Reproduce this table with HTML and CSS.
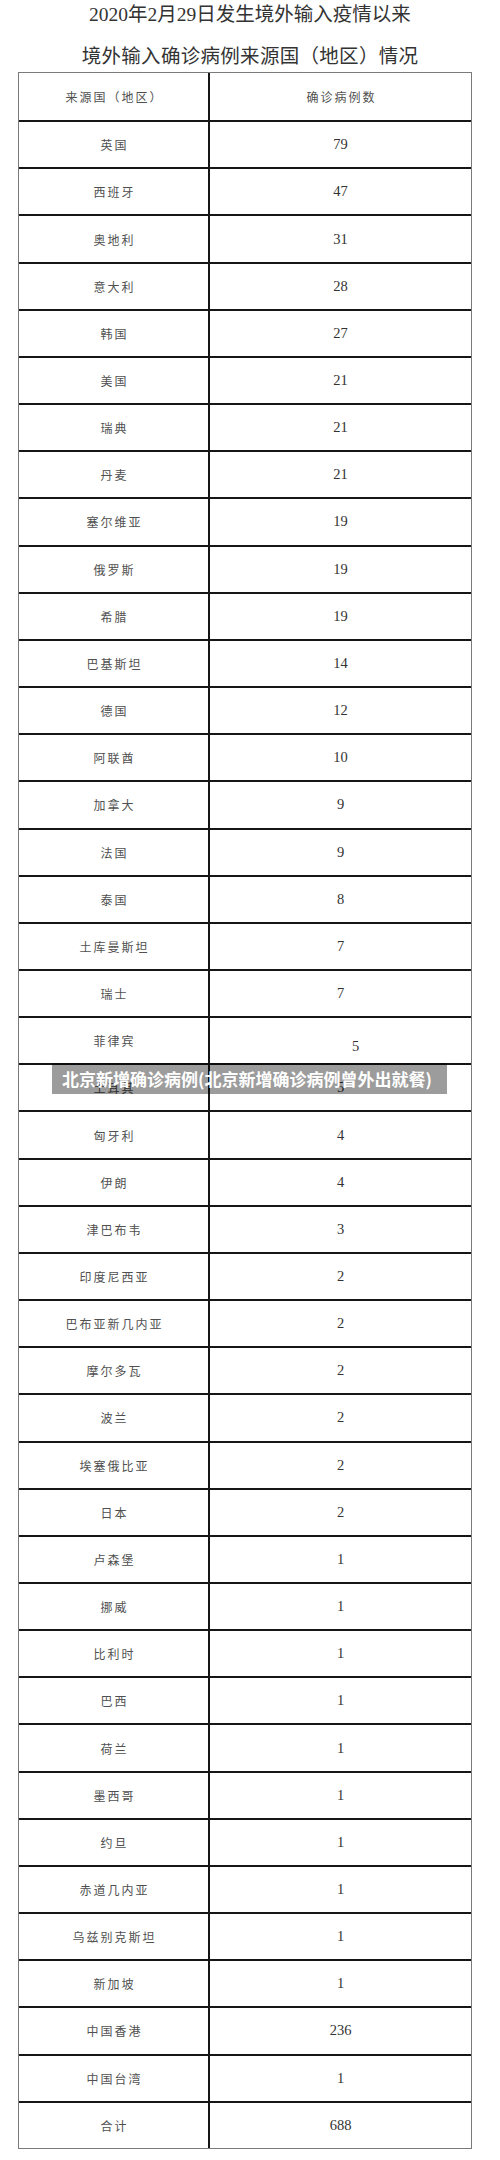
FILE: index.html
```html
<!DOCTYPE html>
<html lang="zh-CN">
<head>
<meta charset="utf-8">
<title>北京新增确诊病例</title>
<link rel="stylesheet" href="styles.css">
</head>
<body>
<div class="page">
  <h1 class="title">
    <span class="title-line">2020年2月29日发生境外输入疫情以来</span>
    <span class="title-line second">境外输入确诊病例来源国（地区）情况</span>
  </h1>
  <div class="table">
    <div class="cell head">来源国（地区）</div><div class="cell head num-col">确诊病例数</div>
    <div class="cell">英国</div><div class="cell num">79</div>
    <div class="cell">西班牙</div><div class="cell num">47</div>
    <div class="cell">奥地利</div><div class="cell num">31</div>
    <div class="cell">意大利</div><div class="cell num">28</div>
    <div class="cell">韩国</div><div class="cell num">27</div>
    <div class="cell">美国</div><div class="cell num">21</div>
    <div class="cell">瑞典</div><div class="cell num">21</div>
    <div class="cell">丹麦</div><div class="cell num">21</div>
    <div class="cell">塞尔维亚</div><div class="cell num">19</div>
    <div class="cell">俄罗斯</div><div class="cell num">19</div>
    <div class="cell">希腊</div><div class="cell num">19</div>
    <div class="cell">巴基斯坦</div><div class="cell num">14</div>
    <div class="cell">德国</div><div class="cell num">12</div>
    <div class="cell">阿联酋</div><div class="cell num">10</div>
    <div class="cell">加拿大</div><div class="cell num">9</div>
    <div class="cell">法国</div><div class="cell num">9</div>
    <div class="cell">泰国</div><div class="cell num">8</div>
    <div class="cell">土库曼斯坦</div><div class="cell num">7</div>
    <div class="cell">瑞士</div><div class="cell num">7</div>
    <div class="cell">菲律宾</div><div class="cell num shifted">5</div>
    <div class="cell">土耳其</div><div class="cell num">5</div>
    <div class="cell">匈牙利</div><div class="cell num">4</div>
    <div class="cell">伊朗</div><div class="cell num">4</div>
    <div class="cell">津巴布韦</div><div class="cell num">3</div>
    <div class="cell">印度尼西亚</div><div class="cell num">2</div>
    <div class="cell">巴布亚新几内亚</div><div class="cell num">2</div>
    <div class="cell">摩尔多瓦</div><div class="cell num">2</div>
    <div class="cell">波兰</div><div class="cell num">2</div>
    <div class="cell">埃塞俄比亚</div><div class="cell num">2</div>
    <div class="cell">日本</div><div class="cell num">2</div>
    <div class="cell">卢森堡</div><div class="cell num">1</div>
    <div class="cell">挪威</div><div class="cell num">1</div>
    <div class="cell">比利时</div><div class="cell num">1</div>
    <div class="cell">巴西</div><div class="cell num">1</div>
    <div class="cell">荷兰</div><div class="cell num">1</div>
    <div class="cell">墨西哥</div><div class="cell num">1</div>
    <div class="cell">约旦</div><div class="cell num">1</div>
    <div class="cell">赤道几内亚</div><div class="cell num">1</div>
    <div class="cell">乌兹别克斯坦</div><div class="cell num">1</div>
    <div class="cell">新加坡</div><div class="cell num">1</div>
    <div class="cell">中国香港</div><div class="cell num">236</div>
    <div class="cell">中国台湾</div><div class="cell num">1</div>
    <div class="cell">合计</div><div class="cell num">688</div>
  </div>
  <div class="banner">北京新增确诊病例(北京新增确诊病例曾外出就餐)</div>
</div>
</body>
</html>
```
FILE: styles.css
```css
html, body {
  margin: 0;
  padding: 0;
  background: #ffffff;
}

.page {
  position: relative;
  width: 500px;
  height: 2160px;
  font-family: "Liberation Serif", "Noto Sans CJK SC", serif;
  color: #333333;
}

.title {
  margin: 0;
  font-size: 19.5px;
  font-weight: 400;
  text-align: center;
  color: #333333;
}

.title-line {
  display: block;
  height: 30px;
  line-height: 30px;
  white-space: nowrap;
}

.title-line.second {
  margin-top: 12px;
  letter-spacing: 0.3px;
}

.table {
  box-sizing: border-box;
  width: 454px;
  margin-left: 18px;
  display: grid;
  grid-template-columns: 189px 1fr;
  grid-auto-rows: 47.16px;
  border: 1px solid #7a7a7a;
}

.cell {
  box-sizing: border-box;
  display: flex;
  align-items: center;
  justify-content: center;
  border-top: 2px solid #161616;
  font-family: "Noto Sans CJK SC", sans-serif;
  font-weight: 400;
  font-size: 12px;
  letter-spacing: 2px;
  padding-left: 2px;
  color: #505050;
}

.cell.head {
  border-top: none;
}

.cell.num,
.cell.num-col {
  border-left: 2px solid #161616;
}

.cell.num {
  font-family: "Liberation Serif", serif;
  font-weight: 400;
  font-size: 14.5px;
  letter-spacing: 0;
  padding-left: 0;
  color: #333333;
}

.cell.num.shifted {
  padding: 12px 0 0 30px;
}

.banner {
  position: absolute;
  left: 52px;
  top: 1063px;
  box-sizing: border-box;
  width: 395px;
  height: 31px;
  padding: 0 10px;
  background: rgba(0, 0, 0, 0.39);
  color: #ffffff;
  font-family: "Noto Sans CJK SC", sans-serif;
  font-weight: 700;
  font-size: 17px;
  line-height: 31px;
  white-space: nowrap;
  overflow: hidden;
}
```
